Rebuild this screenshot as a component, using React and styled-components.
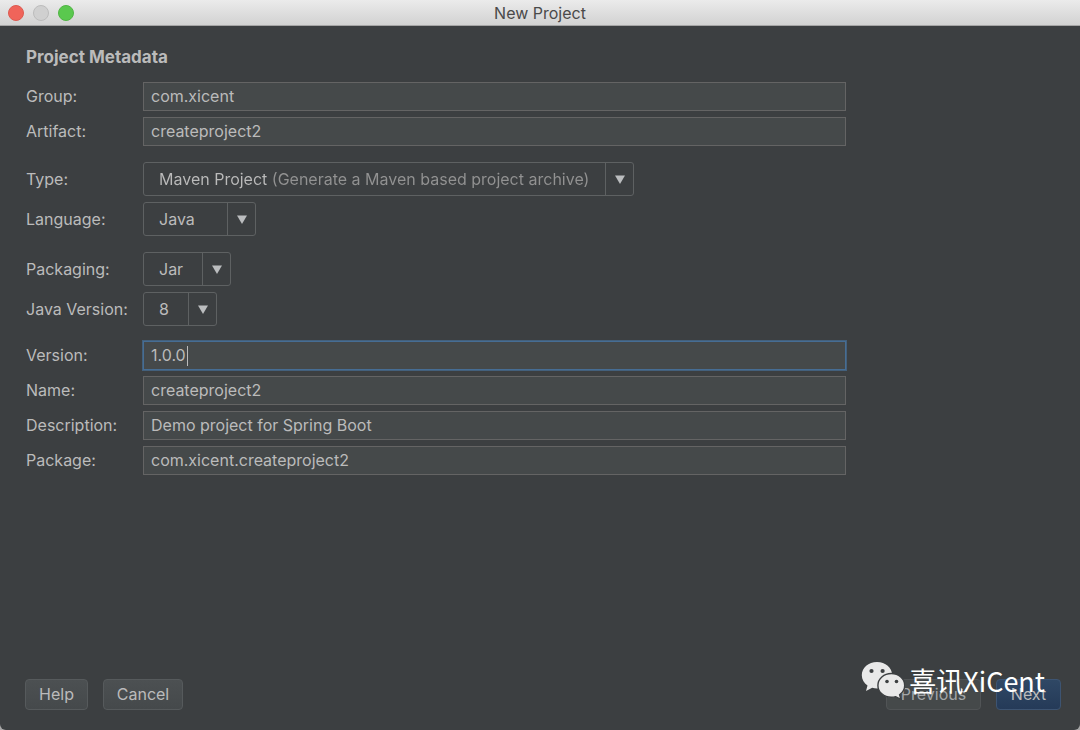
import React from 'react';
import styled, { createGlobalStyle, css } from 'styled-components';

const textFields = {
  coordinates: [
    { id: 'group', label: 'Group:', value: 'com.xicent' },
    { id: 'artifact', label: 'Artifact:', value: 'createproject2' }
  ],
  details: [
    { id: 'version', label: 'Version:', value: '1.0.0', active: true },
    { id: 'name', label: 'Name:', value: 'createproject2' },
    { id: 'description', label: 'Description:', value: 'Demo project for Spring Boot' },
    { id: 'package', label: 'Package:', value: 'com.xicent.createproject2' }
  ]
};

const TextRow = ({ field }) => (
  <Row>
    <Label htmlFor={field.id}>{field.label}</Label>
    <TextInput id={field.id} defaultValue={field.value} $active={field.active} spellCheck={false} />
  </Row>
);

const SelectRow = ({ id, label, value, width, hinted }) => (
  <Row>
    <Label htmlFor={id}>{label}</Label>
    <Combo $width={width}>
      <Select id={id} defaultValue={value} $hinted={hinted}>
        <option value={value}>{value}</option>
      </Select>
      <Arrow viewBox="0 0 10 9" aria-hidden="true">
        <path d="M0 0.5h10L5 9z" fill="#bbbdbf" />
      </Arrow>
    </Combo>
  </Row>
);

const App = () => {
  return (
    <Window>
      <GlobalStyle />
      <TitleBar>
        <Lights>
          <Light type="button" aria-label="Close" $fill="#f0645a" $edge="#dd5a50" />
          <Light type="button" aria-label="Minimize" $fill="#d0d0d0" $edge="#bcbcbc" />
          <Light type="button" aria-label="Zoom" $fill="#5ac84e" $edge="#50b544" />
        </Lights>
        <Title>New Project</Title>
      </TitleBar>

      <Form>
        <Heading>Project Metadata</Heading>
        <Group>
          {textFields.coordinates.map((field) => <TextRow key={field.id} field={field} />)}
        </Group>
        <SelectGroup>
          <SelectRow
            id="type"
            label="Type:"
            value="Maven Project (Generate a Maven based project archive)"
            width="491px"
            hinted
          />
          <SelectRow id="language" label="Language:" value="Java" width="113px" />
        </SelectGroup>
        <SelectGroup>
          <SelectRow id="packaging" label="Packaging:" value="Jar" width="88px" />
          <SelectRow id="javaVersion" label="Java Version:" value="8" width="74px" />
        </SelectGroup>
        <Group>
          {textFields.details.map((field) => <TextRow key={field.id} field={field} />)}
        </Group>
      </Form>

      <Footer>
        <Button type="button" $width="63px">Help</Button>
        <Button type="button" $width="80px">Cancel</Button>
        <Spacer />
        <Button type="button" $width="95px" $faded>Previous</Button>
        <Button type="button" $width="65px" $primary>Next</Button>
        <Watermark>
          <WeChatLogo />
          <span>喜讯XiCent</span>
        </Watermark>
      </Footer>
    </Window>
  );
};

const WeChatLogo = () => (
  <svg width="44" height="38" viewBox="0 0 44 38" aria-hidden="true">
    <path
      d="M16 0C7.500 0 0.800 5.800 0.800 13.200c0 4.200 2.200 7.800 5.700 10.200L5 29l6.200-3.200c1.500.4 3.100.6 4.800.6 8.400 0 15.200-5.900 15.200-13.200S24.400 0 16 0z"
      fill="#e9e9e9"
    />
    <circle cx="10.500" cy="9" r="2.100" fill="#3c3f41" />
    <circle cx="21.600" cy="9" r="2.100" fill="#3c3f41" />
    <path
      d="M30.300 11.500c-7.400 0-13.400 5.300-13.400 11.900s6 11.900 13.400 11.900c1.500 0 3-.2 4.400-.6l5.200 2.600-1.300-4.600c3.100-2.200 5.100-5.500 5.100-9.300 0-6.600-6-11.900-13.400-11.900z"
      fill="#e9e9e9"
      stroke="#3c3f41"
      strokeWidth="1.400"
    />
    <circle cx="26" cy="19.500" r="1.800" fill="#3c3f41" />
    <circle cx="35.500" cy="19.500" r="1.800" fill="#3c3f41" />
  </svg>
);

const GlobalStyle = createGlobalStyle`
  * {
    box-sizing: border-box;
  }

  body {
    margin: 0;
    background: #a8a8a8;
    color: #bbbbbb;
    font-family: Inter, "Liberation Sans", sans-serif;
    font-size: 16px;
    line-height: 20px;
  }

  button, input, select {
    margin: 0;
    color: inherit;
    font: inherit;
  }
`;

const Window = styled.main`
  display: flex;
  flex-direction: column;
  min-height: 100vh;
  overflow: hidden;
  background: #3c3f41;
  border-radius: 0 0 6px 6px;
`;

const TitleBar = styled.header`
  display: grid;
  grid-template-columns: 1fr auto 1fr;
  align-items: center;
  height: 26px;
  padding: 0 8px;
  background: linear-gradient(#ebebeb, #d2d2d2);
  border-bottom: 1px solid #a5a5a5;
`;

const Lights = styled.div`
  display: flex;
  gap: 9px;
`;

const Light = styled.button`
  width: 16px;
  height: 16px;
  padding: 0;
  background: ${props => props.$fill};
  border: 1px solid ${props => props.$edge};
  border-radius: 50%;
`;

const Title = styled.span`
  color: #4a4a4a;
`;

const Form = styled.form`
  display: flex;
  flex-direction: column;
  flex: 1;
  gap: 15px;
  padding: 21px 234px 20px 26px;
`;

const Heading = styled.h1`
  margin: 0;
  font-size: 17px;
  font-weight: 700;
`;

const Group = styled.div`
  display: flex;
  flex-direction: column;
  gap: 6px;
`;

const SelectGroup = styled(Group)`
  padding-top: 1px;
`;

const Row = styled.div`
  display: grid;
  grid-template-columns: 117px minmax(0, 1fr);
  align-items: center;
`;

const Label = styled.label`
  padding-bottom: 1px;
`;

const TextInput = styled.input`
  width: 100%;
  height: 29px;
  padding: 0 7px 1px;
  background: #45494a;
  border: 1px solid #646464;
  border-radius: 0;
  outline: none;

  ${props => props.$active && css`
    background: linear-gradient(#bbbbbb, #bbbbbb) 43px 50% / 1px 20px no-repeat #45494a;
    border-color: #466d94;
    box-shadow: 0 0 0 1px #43607c;
  `}
`;

const Combo = styled.div`
  display: grid;
  grid-template-columns: minmax(0, 1fr) 27px;
  align-items: center;
  width: ${props => props.$width};
  height: 34px;
  border: 1px solid #5e6162;
  border-radius: 3px;
`;

const Select = styled.select`
  width: 100%;
  height: 100%;
  padding: 0 0 0 15px;
  appearance: none;
  background: none;
  border: 0;
  border-right: 1px solid #5e6162;
  outline: none;

  /* the bracketed hint is dimmer than the option name */
  ${props => props.$hinted && css`
    background: linear-gradient(to right, #bbbbbb 126px, #929292 126px);
    background-clip: text;
    color: transparent;
  `}
`;

const Arrow = styled.svg`
  justify-self: center;
  width: 10px;
  height: 9px;
  pointer-events: none;
`;

const Footer = styled.footer`
  position: relative;
  display: flex;
  gap: 15px;
  padding: 0 19px 20px 25px;
`;

const Spacer = styled.div`
  flex: 1;
`;

const Button = styled.button`
  width: ${props => props.$width};
  height: 31px;
  padding: 0 0 1px;
  background: ${props => (props.$primary
    ? 'linear-gradient(#2f4865, #253a58)'
    : 'linear-gradient(#4c5052, #45494b)')};
  border: 1px solid ${props => (props.$primary ? '#3d5472' : '#565a5c')};
  border-radius: 4px;

  ${props => props.$faded && css`
    background: #45494a;
    border-color: #515456;
    color: #a3a6a8;
  `}
`;

const Watermark = styled.div`
  position: absolute;
  right: 35px;
  bottom: 30px;
  display: flex;
  align-items: center;
  gap: 4px;
  color: #ffffff;
  font-family: "Noto Sans CJK SC", sans-serif;
  font-size: 27px;
  line-height: 38px;
  pointer-events: none;
`;

export default App;
